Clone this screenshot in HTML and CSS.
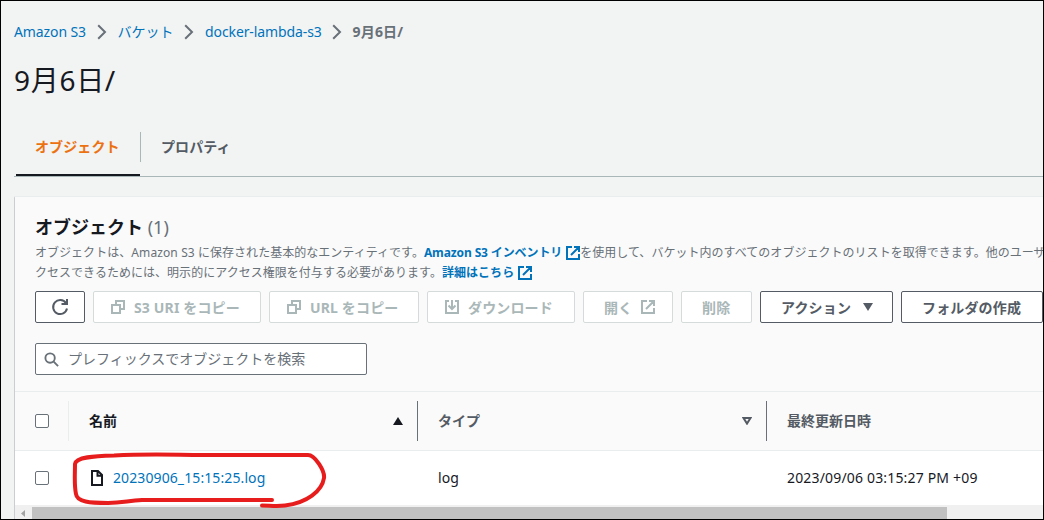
FILE: index.html
```html
<!DOCTYPE html>
<html lang="ja">
<head>
  <meta charset="UTF-8" />
  <title>9月6日/ - Amazon S3</title>
  <link rel="stylesheet" href="styles.css">
</head>
<body>
  <svg class="sprite">
    <symbol id="chevron" viewBox="0 0 10 16"><path d="M1.2 1.2 L8 8 L1.2 14.8" /></symbol>
    <symbol id="external" viewBox="0 0 14 14"><path d="M6 1 H1 V13 H13 V8 M8 1 H13 V6 M13 1 L5 9" /></symbol>
    <symbol id="copy" viewBox="0 0 14 14"><path d="M1 5 H9 V13 H1 Z M5 5 V1 H13 V9 H9" /></symbol>
  </svg>

  <div class="console">
    <nav class="breadcrumb">
      <a class="crumb-s3">Amazon S3</a>
      <svg class="chevron"><use href="#chevron" /></svg>
      <a>バケット</a>
      <svg class="chevron"><use href="#chevron" /></svg>
      <a class="crumb-bucket">docker-lambda-s3</a>
      <svg class="chevron"><use href="#chevron" /></svg>
      <span class="current">9月6日/</span>
    </nav>

    <h1>9月6日/</h1>

    <div class="tabs">
      <div class="tab active"><span>オブジェクト</span></div>
      <div class="tab"><span>プロパティ</span></div>
    </div>

    <section class="card">
      <div class="card-header">
        <h2>オブジェクト <span class="count">(1)</span></h2>
        <p class="description">オブジェクトは、<span class="latin">Amazon S3</span> に保存された基本的なエンティティです。<a class="inventory">Amazon S3 インベントリ <svg class="icon"><use href="#external" /></svg></a>を使用して、バケット内のすべてのオブジェクトのリストを取得できます。他のユーザ<br>クセスできるためには、明示的にアクセス権限を付与する必要があります。<a>詳細はこちら <svg class="icon"><use href="#external" /></svg></a></p>

        <div class="actions">
          <button class="btn refresh">
            <svg class="icon-lg" viewBox="0 0 18 18"><path d="M15 5.2 A7 7 0 1 0 16 10.5 M16 1 V6 H10.5" /></svg>
          </button>
          <button class="btn copy-uri" disabled><svg class="icon"><use href="#copy" /></svg>S3 URI をコピー</button>
          <button class="btn copy-url" disabled><svg class="icon"><use href="#copy" /></svg>URL をコピー</button>
          <button class="btn download" disabled>
            <svg class="icon" viewBox="0 0 14 14"><path d="M4 1 H1 V13 H13 V1 H10 M7 0 V9 M3.5 5.5 L7 9 L10.5 5.5" /></svg>ダウンロード
          </button>
          <button class="btn open" disabled>開く<svg class="icon"><use href="#external" /></svg></button>
          <button class="btn delete" disabled>削除</button>
          <button class="btn menu">アクション<svg class="caret" viewBox="0 0 10 8"><path d="M0 0 H10 L5 8 Z" /></svg></button>
          <button class="btn folder">フォルダの作成</button>
        </div>

        <div class="search">
          <svg class="search-icon" viewBox="0 0 16 16"><circle cx="6.5" cy="6.5" r="5" /><path d="M10.3 10.3 L15 15" /></svg>
          <span>プレフィックスでオブジェクトを検索</span>
        </div>
      </div>

      <div class="row head">
        <div class="cell check"><span class="checkbox"></span></div>
        <div class="cell sorted"><span>名前</span><svg class="caret" viewBox="0 0 10 8"><path d="M0 8 H10 L5 0 Z" /></svg></div>
        <div class="cell"><span>タイプ</span><svg class="caret outline" viewBox="0 0 10 8"><path d="M1.5 1 H8.5 L5 6.6 Z" /></svg></div>
        <div class="cell"><span>最終更新日時</span></div>
      </div>
      <div class="row item">
        <div class="cell check"><span class="checkbox"></span></div>
        <div class="cell">
          <svg class="file" viewBox="0 0 12 16"><path d="M1 1 H7 L11 5 V15 H1 Z M6.5 1 V5.8 H11" /></svg>
          <a class="value">20230906_15:15:25.log</a>
        </div>
        <div class="cell"><span class="value">log</span></div>
        <div class="cell"><span class="value date">2023/09/06 03:15:27 PM +09</span></div>
      </div>

      <div class="scrollbar">
        <svg class="arrow" viewBox="0 0 4 7"><path d="M4 0 V7 L0 3.5 Z" /></svg>
        <div class="thumb"></div>
      </div>
    </section>

    <!-- hand-drawn marker around the log file -->
    <svg class="marker" viewBox="0 0 260 64">
      <path d="M200 49 H70 C55 50 50 52 36 52 C18 52 5 51 4 43 C2 34 3 24 3 13 C4 6 22 5 42 4.500 C80 2.500 105 4 130 4 H236 C243 4 253 20 252 27 C250 40 235 52 213 54.500 C204 55.500 198 54.500 190 54.500" />
    </svg>
  </div>
</body>
</html>
```

FILE: styles.css
```css
* {
  box-sizing: border-box;
}

body {
  margin: 0;
  font-family: 'Noto Sans', 'Noto Sans CJK JP', sans-serif;
  font-size: 14px;
  color: #16191f;
}

a {
  color: #0073bb;
}

svg {
  fill: none;
  stroke: currentColor;
  stroke-width: 2;
  flex-shrink: 0;
}

.sprite {
  display: none;
}

.console {
  position: relative;
  width: 1044px;
  height: 520px;
  padding-left: 13px;
  border: 1px solid #000;
  background: #f2f3f3;
  overflow: hidden;
}

.breadcrumb {
  display: flex;
  align-items: center;
  height: 22px;
  margin-top: 20px;
  line-height: 22px;
  white-space: nowrap;
}

.crumb-s3 {
  width: 72px;
  letter-spacing: -0.1px;
}

.crumb-bucket {
  width: 116px;
  letter-spacing: -0.1px;
}

.chevron {
  width: 10px;
  height: 16px;
  margin: 0 11px 0 10.5px;
  color: #687078;
}

.current {
  color: #687078;
  font-weight: bold;
  letter-spacing: 0.2px;
}

h1 {
  height: 36px;
  margin: 19px 0 0;
  font-size: 28px;
  font-weight: normal;
  letter-spacing: 0.7px;
  line-height: 36px;
}

.tabs {
  display: flex;
  height: 45px;
  margin-top: 34px;
  border-bottom: 1px solid #aab7b8;
}

.tab {
  height: 44px;
  padding-left: 19px;
  color: #545b64;
  font-weight: bold;
  letter-spacing: 0.1px;
  line-height: 30px;
}

.tab.active {
  width: 124px;
  margin-left: 2px;
  color: #ec7211;
  border-bottom: 2px solid #16191f;
}

.tab.active + .tab {
  padding-left: 0;
}

.tab.active + .tab span {
  display: block;
  height: 30px;
  padding-left: 20px;
  border-left: 1px solid #aab7b8;
}

.card {
  height: 323px;
  margin-top: 19px;
  border-top: 1px solid #eaeded;
  border-left: 1px solid #c9cece;
  border-top-left-radius: 2px;
  background: #fff;
}

.card-header {
  height: 195px;
  padding: 18px 0 0 20px;
  background: #fafafa;
  border-bottom: 1px solid #eaeded;
}

h2 {
  height: 24px;
  margin: 0;
  font-size: 18px;
  line-height: 24px;
}

.count {
  color: #687078;
  font-weight: normal;
}

.description {
  height: 40px;
  margin: 4px 0 0;
  color: #687078;
  font-size: 12px;
  letter-spacing: 0.03px;
  line-height: 20px;
  white-space: nowrap;
}

.latin {
  letter-spacing: 0.12px;
}

.description a {
  font-weight: bold;
}

.description .inventory {
  letter-spacing: -0.12px;
}

.icon {
  width: 14px;
  height: 14px;
}

.description .icon {
  margin-left: 1px;
  vertical-align: -3px;
}

.actions {
  display: flex;
  gap: 8px;
  width: 1008px;
  margin-top: 8px;
}

.btn {
  display: flex;
  align-items: center;
  flex-shrink: 0;
  height: 32px;
  padding: 0 0 1px 20px;
  border: 1px solid #545b64;
  border-radius: 2px;
  background: #fff;
  color: #545b64;
  font: inherit;
  font-weight: bold;
  letter-spacing: 0.15px;
  white-space: nowrap;
}

.btn svg {
  position: relative;
  top: 0.5px;
}

.btn:disabled {
  border-color: #d5dbdb;
  color: #aab7b8;
}

.refresh {
  width: 50px;
  padding-left: 15px;
}

.icon-lg {
  width: 18px;
  height: 18px;
}

.copy-uri {
  width: 168px;
}

.copy-url {
  width: 150px;
}

.download {
  width: 148px;
}

.copy-uri,
.copy-url,
.download {
  gap: 9px;
  padding-left: 17px;
}

.open {
  width: 90px;
  gap: 9px;
}

.delete {
  width: 71px;
}

.menu {
  width: 133px;
  gap: 12px;
}

.folder {
  width: 142px;
}

.caret {
  width: 10px;
  height: 8px;
  fill: currentColor;
  stroke: none;
}

.caret.outline {
  fill: none;
  stroke: currentColor;
  stroke-width: 2;
}

.search {
  display: flex;
  align-items: center;
  gap: 9px;
  width: 332px;
  height: 32px;
  margin-top: 20px;
  padding-left: 8px;
  border: 1px solid #687078;
  border-radius: 2px;
  background: #fff;
  color: #687078;
}

.search span {
  padding-bottom: 2px;
}

.search-icon {
  width: 15px;
  height: 15px;
}

.row {
  display: grid;
  grid-template-columns: 54px 349px 349px 1fr;
  align-items: center;
  border-bottom: 1px solid #eaeded;
}

.head {
  height: 59px;
  background: #fafafa;
  color: #545b64;
  font-weight: bold;
}

.item {
  height: 54px;
  border-bottom: 0;
}

.cell {
  display: flex;
  align-items: center;
  height: 40px;
  padding-left: 20px;
}

.head .cell {
  justify-content: space-between;
  padding-right: 14px;
  border-right: 1px solid #687078;
}

.head .cell span:not(.checkbox) {
  padding-bottom: 2px;
}

.head .check {
  border-color: #eaeded;
}

.head .cell:last-child {
  border-right: 0;
}

.head .sorted {
  color: #16191f;
}

.value {
  padding-bottom: 2px;
  letter-spacing: 0.1px;
}

.date {
  letter-spacing: 0.17px;
}

.checkbox {
  width: 14px;
  height: 14px;
  flex-shrink: 0;
  border: 1px solid #687078;
  border-radius: 2px;
  background: #fff;
}

.file {
  width: 12px;
  height: 16px;
  margin: 0 10px 0 2px;
}

.scrollbar {
  display: flex;
  align-items: center;
  height: 14px;
  background: #f0f0f0;
}

.arrow {
  width: 4px;
  height: 7px;
  margin: 2px 7px 0 6px;
  fill: #a3a3a3;
  stroke: none;
}

.thumb {
  width: 915px;
  height: 12px;
  margin-top: 2px;
  background: #c1c1c1;
}

.marker {
  position: absolute;
  left: 71px;
  top: 450px;
  width: 260px;
  height: 64px;
  color: #e71d1d;
  stroke-width: 4;
  stroke-linecap: round;
  stroke-linejoin: round;
}
```
